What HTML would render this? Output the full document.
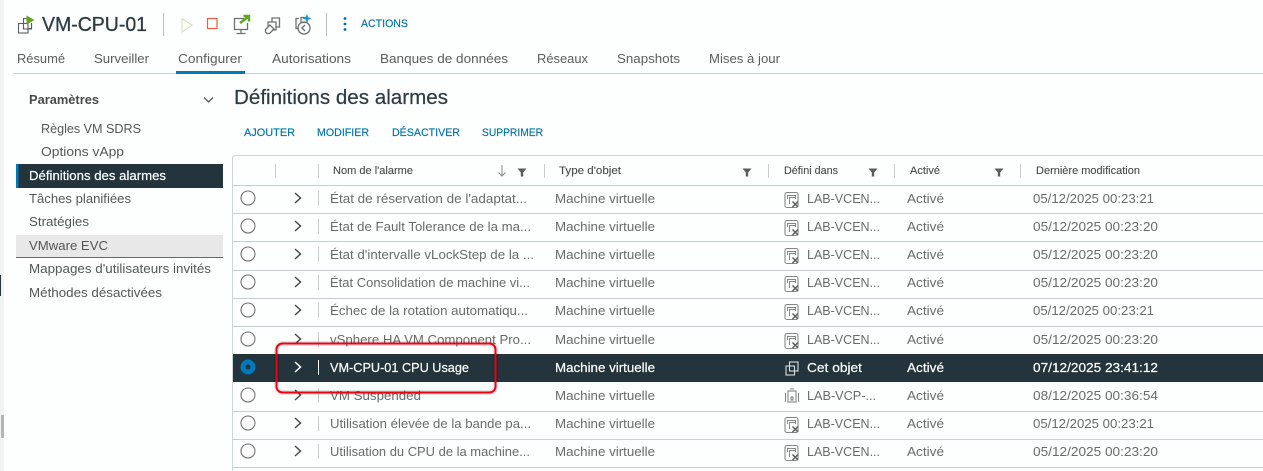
<!DOCTYPE html>
<html lang="fr"><head><meta charset="utf-8"><title>VM-CPU-01</title>
<style>
html,body{margin:0;padding:0;background:#fdfefe;width:1263px;height:471px;overflow:hidden}
svg{display:block;font-family:"Liberation Sans",sans-serif}
text{white-space:pre}
.tab{font-size:13px;fill:#5c5c5c}
.side{font-size:13px;fill:#565656}
.act{font-size:11px;fill:#0072a3;stroke:#0072a3;stroke-width:.15}
.th{font-size:11px;fill:#4a4a4a;stroke:#4a4a4a;stroke-width:.12}
.td{font-size:13px;fill:#6a6a6a}
.sel{font-size:13px;fill:#fff;stroke:#fff;stroke-width:.2}
</style></head><body>
<svg width="1263" height="471" viewBox="0 0 1263 471" xmlns="http://www.w3.org/2000/svg">
<defs>
<g id="radio"><circle r="7" fill="#fff" stroke="#6f6f6f" stroke-width="1.1"/></g>
<path id="chev" d="M-3 -5L2.5 0L-3 5" fill="none" stroke="#4a4a4a" stroke-width="1.5"/>
<path id="funnel" d="M-4.5 -3.5H4.5L1.2 0.5V4.5H-1.2V0.5Z" fill="#5c5c5c"/>
<g id="vc" fill="none" stroke="#858585" stroke-width="1.1">
<rect x="-7" y="-7.500" width="13" height="15" rx="2"/>
<path d="M-4.500 -1V-4.500H3.500V-1" stroke-width="1"/>
<path d="M-2.500 4V-2.500H3" stroke-width="1"/>
<path d="M0.500 1.500L6 7M6 1.500L0.500 7" stroke="#5c5c5c" stroke-width="1.500"/>
</g>
<g id="vmi" fill="none" stroke-width="1.1">
<rect x="-2.500" y="-6" width="8.500" height="9"/>
<rect x="-6" y="-2" width="8.500" height="9"/>
</g>
</defs>

<rect x="0" y="0" width="4" height="471" fill="#f1f2f2"/>
<rect x="0" y="275" width="1" height="21" fill="#24353d"/>
<rect x="1" y="415" width="3" height="23" fill="#b5b5b5"/>

<!-- header -->
<g fill="none" stroke="#5c5c5c" stroke-width="1.100">
<path d="M23.500 23V18.500H27M31.500 23V28.500H28"/>
<rect x="18.500" y="23.500" width="9.500" height="9.500"/>
<path d="M23.500 23.500V29H31.500V23"/>
</g>
<path d="M26.500 15.500V24.500L34.500 20Z" fill="#62a420"/>
<text x="42" y="31" font-size="20" fill="#2d3b43" stroke="#2d3b43" stroke-width=".3" textLength="105" lengthAdjust="spacingAndGlyphs">VM-CPU-01</text>
<rect x="163" y="13" width="1" height="23" fill="#b9bec0"/>
<path d="M182 18.500V32L192 25.200Z" fill="none" stroke="#cfe3bd" stroke-width="1.100"/>
<rect x="207.500" y="18.500" width="9.500" height="10" fill="none" stroke="#ef5b3e" stroke-width="1.200"/>
<g fill="none" stroke="#707070" stroke-width="1.300">
<path d="M244 18.500H234.500V29.500H247.500V23"/><path d="M241 29.500V33.500M236.500 33.500H245.500"/>
<path d="M272 22V18H279.500V27H276M268 27V22H276V30H272"/>
<path d="M265.500 29.500L270 25L274 29L269.500 33.500H267L265.500 32Z"/>
<path d="M299 18.500H296V28.500H299"/><rect x="301" y="17.500" width="6" height="5"/>
<circle cx="304" cy="28" r="6"/>
<path d="M305 25L302 28L305 31"/>
</g>
<path d="M240 23L248 17M243.500 16H249V21.500" fill="none" stroke="#62a420" stroke-width="2.400"/>
<path d="M307 14l1.300 3.200 3.200 1.300 -3.200 1.300 -1.300 3.200 -1.300 -3.200 -3.200 -1.300 3.200 -1.300z" fill="#1b9ad6"/>
<rect x="326" y="13" width="1" height="23" fill="#b9bec0"/>
<g fill="#0072a3"><circle cx="345" cy="18.500" r="1.400"/><circle cx="345" cy="24" r="1.400"/><circle cx="345" cy="29.500" r="1.400"/></g>
<text x="361" y="27" class="act" textLength="47" lengthAdjust="spacingAndGlyphs">ACTIONS</text>

<!-- tabs -->
<text x="17" y="63" class="tab" textLength="48" lengthAdjust="spacingAndGlyphs">Résumé</text>
<text x="94" y="63" class="tab" textLength="55" lengthAdjust="spacingAndGlyphs">Surveiller</text>
<text x="178" y="63" class="tab" textLength="64" lengthAdjust="spacingAndGlyphs">Configurer</text>
<text x="272" y="63" class="tab" textLength="79" lengthAdjust="spacingAndGlyphs">Autorisations</text>
<text x="380" y="63" class="tab" textLength="128" lengthAdjust="spacingAndGlyphs">Banques de données</text>
<text x="537" y="63" class="tab" textLength="51" lengthAdjust="spacingAndGlyphs">Réseaux</text>
<text x="617" y="63" class="tab" textLength="63" lengthAdjust="spacingAndGlyphs">Snapshots</text>
<text x="709" y="63" class="tab" textLength="71" lengthAdjust="spacingAndGlyphs">Mises à jour</text>
<rect x="13" y="73" width="1250" height="1" fill="#ccd4d8"/>
<rect x="176" y="71" width="69" height="3" fill="#0079b8"/>

<!-- sidebar -->
<text x="29" y="104" font-size="13" font-weight="bold" fill="#4a4a4a" textLength="70" lengthAdjust="spacingAndGlyphs">Paramètres</text>
<path d="M204 97.500L208.500 102L213 97.500" fill="none" stroke="#555" stroke-width="1.300"/>
<text x="41" y="133" class="side" textLength="100" lengthAdjust="spacingAndGlyphs">Règles VM SDRS</text>
<text x="41" y="156" class="side" textLength="83" lengthAdjust="spacingAndGlyphs">Options vApp</text>
<rect x="16" y="164" width="207" height="24" fill="#23343c"/>
<rect x="16" y="164" width="2.500" height="24" fill="#0079b8"/>
<text x="29" y="180" class="sel" textLength="137" lengthAdjust="spacingAndGlyphs">Définitions des alarmes</text>
<text x="29" y="203" class="side" textLength="102" lengthAdjust="spacingAndGlyphs">Tâches planifiées</text>
<text x="29" y="226" class="side" textLength="60" lengthAdjust="spacingAndGlyphs">Stratégies</text>
<rect x="16" y="235" width="207" height="22" fill="#e8e8e8"/>
<rect x="16" y="257" width="207" height="1" fill="#666"/>
<text x="29" y="250" class="side" textLength="79" lengthAdjust="spacingAndGlyphs">VMware EVC</text>
<text x="29" y="273" class="side" textLength="182" lengthAdjust="spacingAndGlyphs">Mappages d'utilisateurs invités</text>
<text x="29" y="297" class="side" textLength="133" lengthAdjust="spacingAndGlyphs">Méthodes désactivées</text>

<!-- main heading -->
<text x="234" y="104" font-size="20" fill="#2d3b43" stroke="#2d3b43" stroke-width=".2" textLength="214" lengthAdjust="spacingAndGlyphs">Définitions des alarmes</text>
<text x="244" y="136" class="act" textLength="51" lengthAdjust="spacingAndGlyphs">AJOUTER</text>
<text x="317" y="136" class="act" textLength="52" lengthAdjust="spacingAndGlyphs">MODIFIER</text>
<text x="392" y="136" class="act" textLength="68" lengthAdjust="spacingAndGlyphs">DÉSACTIVER</text>
<text x="482" y="136" class="act" textLength="61" lengthAdjust="spacingAndGlyphs">SUPPRIMER</text>

<!-- table frame -->
<path d="M232.500 471V158a2.500 2.500 0 0 1 2.500 -2.500H1263" fill="none" stroke="#ccd4d8"/>
<g fill="#c6ced2">
<rect x="233" y="185" width="1030" height="1"/><rect x="233" y="213" width="1030" height="1"/>
<rect x="233" y="241" width="1030" height="1"/><rect x="233" y="270" width="1030" height="1"/>
<rect x="233" y="298" width="1030" height="1"/><rect x="233" y="326" width="1030" height="1"/>
<rect x="233" y="411" width="1030" height="1"/><rect x="233" y="439" width="1030" height="1"/>
<rect x="233" y="467" width="1030" height="1"/>
<rect x="275" y="164" width="1" height="14"/><rect x="318" y="164" width="1" height="14"/>
<rect x="544" y="164" width="1" height="14"/><rect x="768" y="164" width="1" height="14"/>
<rect x="894" y="164" width="1" height="14"/><rect x="1020" y="164" width="1" height="14"/>
</g>
<text x="333" y="174" class="th" textLength="80" lengthAdjust="spacingAndGlyphs">Nom de l'alarme</text>
<path d="M502 165V176M498.500 172.500L502 176L505.500 172.500" fill="none" stroke="#888"/>
<use href="#funnel" x="522" y="172"/>
<text x="559" y="174" class="th" textLength="62" lengthAdjust="spacingAndGlyphs">Type d'objet</text>
<use href="#funnel" x="747" y="172"/>
<text x="784" y="174" class="th" textLength="54" lengthAdjust="spacingAndGlyphs">Défini dans</text>
<use href="#funnel" x="873" y="172"/>
<text x="910" y="174" class="th" textLength="30" lengthAdjust="spacingAndGlyphs">Activé</text>
<use href="#funnel" x="999" y="172"/>
<text x="1036" y="174" class="th" textLength="104" lengthAdjust="spacingAndGlyphs">Dernière modification</text>

<!-- row 1 -->
<g transform="translate(0,198)"><use href="#radio" x="248"/><use href="#chev" x="298"/><rect x="318" y="-7" width="1" height="15" fill="#c6ced2"/>
<text x="330" y="5" class="td" textLength="197" lengthAdjust="spacingAndGlyphs">État de réservation de l'adaptat...</text>
<text x="555" y="5" class="td" textLength="100" lengthAdjust="spacingAndGlyphs">Machine virtuelle</text>
<use href="#vc" x="792" y="2"/><text x="807" y="5" class="td" textLength="73" lengthAdjust="spacingAndGlyphs">LAB-VCEN...</text>
<text x="907" y="5" class="td" textLength="37" lengthAdjust="spacingAndGlyphs">Activé</text>
<text x="1033" y="5" class="td" textLength="121" lengthAdjust="spacingAndGlyphs">05/12/2025 00:23:21</text></g>
<!-- row 2 -->
<g transform="translate(0,226)"><use href="#radio" x="248"/><use href="#chev" x="298"/><rect x="318" y="-7" width="1" height="15" fill="#c6ced2"/>
<text x="330" y="5" class="td" textLength="201" lengthAdjust="spacingAndGlyphs">État de Fault Tolerance de la ma...</text>
<text x="555" y="5" class="td" textLength="100" lengthAdjust="spacingAndGlyphs">Machine virtuelle</text>
<use href="#vc" x="792" y="2"/><text x="807" y="5" class="td" textLength="73" lengthAdjust="spacingAndGlyphs">LAB-VCEN...</text>
<text x="907" y="5" class="td" textLength="37" lengthAdjust="spacingAndGlyphs">Activé</text>
<text x="1033" y="5" class="td" textLength="125" lengthAdjust="spacingAndGlyphs">05/12/2025 00:23:20</text></g>
<!-- row 3 -->
<g transform="translate(0,254)"><use href="#radio" x="248"/><use href="#chev" x="298"/><rect x="318" y="-7" width="1" height="15" fill="#c6ced2"/>
<text x="330" y="5" class="td" textLength="204" lengthAdjust="spacingAndGlyphs">État d'intervalle vLockStep de la ...</text>
<text x="555" y="5" class="td" textLength="100" lengthAdjust="spacingAndGlyphs">Machine virtuelle</text>
<use href="#vc" x="792" y="2"/><text x="807" y="5" class="td" textLength="73" lengthAdjust="spacingAndGlyphs">LAB-VCEN...</text>
<text x="907" y="5" class="td" textLength="37" lengthAdjust="spacingAndGlyphs">Activé</text>
<text x="1033" y="5" class="td" textLength="125" lengthAdjust="spacingAndGlyphs">05/12/2025 00:23:20</text></g>
<!-- row 4 -->
<g transform="translate(0,282)"><use href="#radio" x="248"/><use href="#chev" x="298"/><rect x="318" y="-7" width="1" height="15" fill="#c6ced2"/>
<text x="330" y="5" class="td" textLength="200" lengthAdjust="spacingAndGlyphs">État Consolidation de machine vi...</text>
<text x="555" y="5" class="td" textLength="100" lengthAdjust="spacingAndGlyphs">Machine virtuelle</text>
<use href="#vc" x="792" y="2"/><text x="807" y="5" class="td" textLength="73" lengthAdjust="spacingAndGlyphs">LAB-VCEN...</text>
<text x="907" y="5" class="td" textLength="37" lengthAdjust="spacingAndGlyphs">Activé</text>
<text x="1033" y="5" class="td" textLength="125" lengthAdjust="spacingAndGlyphs">05/12/2025 00:23:20</text></g>
<!-- row 5 -->
<g transform="translate(0,310)"><use href="#radio" x="248"/><use href="#chev" x="298"/><rect x="318" y="-7" width="1" height="15" fill="#c6ced2"/>
<text x="330" y="5" class="td" textLength="198" lengthAdjust="spacingAndGlyphs">Échec de la rotation automatiqu...</text>
<text x="555" y="5" class="td" textLength="100" lengthAdjust="spacingAndGlyphs">Machine virtuelle</text>
<use href="#vc" x="792" y="2"/><text x="807" y="5" class="td" textLength="73" lengthAdjust="spacingAndGlyphs">LAB-VCEN...</text>
<text x="907" y="5" class="td" textLength="37" lengthAdjust="spacingAndGlyphs">Activé</text>
<text x="1033" y="5" class="td" textLength="121" lengthAdjust="spacingAndGlyphs">05/12/2025 00:23:21</text></g>
<!-- row 6 -->
<g transform="translate(0,339)"><use href="#radio" x="248"/><use href="#chev" x="298"/><rect x="318" y="-7" width="1" height="15" fill="#c6ced2"/>
<text x="330" y="5" class="td" textLength="201" lengthAdjust="spacingAndGlyphs">vSphere HA VM Component Pro...</text>
<text x="555" y="5" class="td" textLength="100" lengthAdjust="spacingAndGlyphs">Machine virtuelle</text>
<use href="#vc" x="792" y="2"/><text x="807" y="5" class="td" textLength="73" lengthAdjust="spacingAndGlyphs">LAB-VCEN...</text>
<text x="907" y="5" class="td" textLength="37" lengthAdjust="spacingAndGlyphs">Activé</text>
<text x="1033" y="5" class="td" textLength="125" lengthAdjust="spacingAndGlyphs">05/12/2025 00:23:20</text></g>
<!-- selected -->
<rect x="233" y="354" width="1030" height="28" fill="#23343c"/>
<g transform="translate(0,367)"><circle cx="248" r="7.500" fill="#0079b8"/><circle cx="248" r="2.500" fill="#23343c"/><path d="M295 -5L300.500 0L295 5" fill="none" stroke="#fff" stroke-width="1.500"/><rect x="318" y="-7" width="1" height="15" fill="#fff"/>
<text x="330" y="5" class="sel" textLength="139" lengthAdjust="spacingAndGlyphs">VM-CPU-01 CPU Usage</text>
<text x="555" y="5" class="sel" textLength="100" lengthAdjust="spacingAndGlyphs">Machine virtuelle</text>
<use href="#vmi" x="792" y="1" stroke="#d8dde0"/><text x="807" y="5" class="sel" textLength="55" lengthAdjust="spacingAndGlyphs">Cet objet</text>
<text x="907" y="5" class="sel" textLength="37" lengthAdjust="spacingAndGlyphs">Activé</text>
<text x="1033" y="5" class="sel" textLength="125" lengthAdjust="spacingAndGlyphs">07/12/2025 23:41:12</text></g>
<!-- row 8 -->
<g transform="translate(0,395)"><use href="#radio" x="248"/><use href="#chev" x="298"/><rect x="318" y="-7" width="1" height="15" fill="#c6ced2"/>
<text x="330" y="5" class="td" textLength="91" lengthAdjust="spacingAndGlyphs">VM Suspended</text>
<text x="555" y="5" class="td" textLength="100" lengthAdjust="spacingAndGlyphs">Machine virtuelle</text>
<g fill="none" stroke="#858585" stroke-width="1.100"><rect x="788" y="-4" width="8" height="11"/><path d="M785.500 -2V7M798.500 -2V7M790 -6H794"/><rect x="791" y="2" width="2" height="3"/></g>
<text x="807" y="5" class="td" textLength="69" lengthAdjust="spacingAndGlyphs">LAB-VCP-...</text>
<text x="907" y="5" class="td" textLength="37" lengthAdjust="spacingAndGlyphs">Activé</text>
<text x="1033" y="5" class="td" textLength="125" lengthAdjust="spacingAndGlyphs">08/12/2025 00:36:54</text></g>
<!-- row 9 -->
<g transform="translate(0,423)"><use href="#radio" x="248"/><use href="#chev" x="298"/><rect x="318" y="-7" width="1" height="15" fill="#c6ced2"/>
<text x="330" y="5" class="td" textLength="201" lengthAdjust="spacingAndGlyphs">Utilisation élevée de la bande pa...</text>
<text x="555" y="5" class="td" textLength="100" lengthAdjust="spacingAndGlyphs">Machine virtuelle</text>
<use href="#vc" x="792" y="2"/><text x="807" y="5" class="td" textLength="73" lengthAdjust="spacingAndGlyphs">LAB-VCEN...</text>
<text x="907" y="5" class="td" textLength="37" lengthAdjust="spacingAndGlyphs">Activé</text>
<text x="1033" y="5" class="td" textLength="121" lengthAdjust="spacingAndGlyphs">05/12/2025 00:23:21</text></g>
<!-- row 10 -->
<g transform="translate(0,451)"><use href="#radio" x="248"/><use href="#chev" x="298"/><rect x="318" y="-7" width="1" height="15" fill="#c6ced2"/>
<text x="330" y="5" class="td" textLength="200" lengthAdjust="spacingAndGlyphs">Utilisation du CPU de la machine...</text>
<text x="555" y="5" class="td" textLength="100" lengthAdjust="spacingAndGlyphs">Machine virtuelle</text>
<use href="#vc" x="792" y="2"/><text x="807" y="5" class="td" textLength="73" lengthAdjust="spacingAndGlyphs">LAB-VCEN...</text>
<text x="907" y="5" class="td" textLength="37" lengthAdjust="spacingAndGlyphs">Activé</text>
<text x="1033" y="5" class="td" textLength="125" lengthAdjust="spacingAndGlyphs">05/12/2025 00:23:20</text></g>

<!-- red highlight -->
<rect x="276.500" y="343.500" width="219" height="49" rx="6" fill="none" stroke="#000" stroke-opacity=".1" stroke-width="5"/>
<rect x="276.500" y="343.500" width="219" height="49" rx="6" fill="none" stroke="#f00010" stroke-width="2"/>
</svg>
</body></html>
